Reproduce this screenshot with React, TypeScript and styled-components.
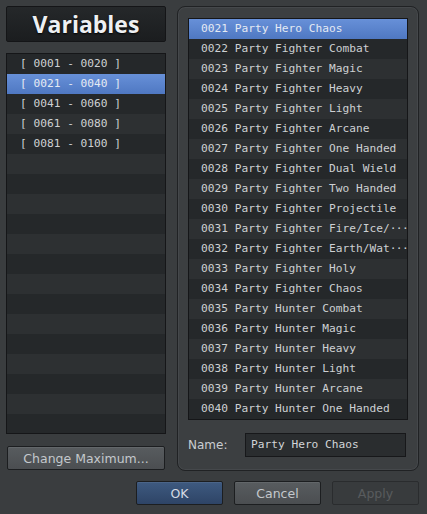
import styled, { createGlobalStyle } from 'styled-components';

const GlobalStyle = createGlobalStyle`
  html, body {
    margin: 0;
    padding: 0;
    background: #3a3d3f;
    overflow: hidden;
  }
  * {
    box-sizing: border-box;
  }
`;

const UI_FONT = `'DejaVu Sans', 'Liberation Sans', sans-serif`;
const MONO_FONT = `'DejaVu Sans Mono', 'Liberation Mono', monospace`;

const Page = styled.div`
  width: 427px;
  height: 514px;
  padding: 6px 8px 0 6px;
  display: flex;
  flex-direction: column;
  gap: 10px;
  font-family: ${UI_FONT};
  font-size: 12px;
  color: #c9cdd1;
`;

const Main = styled.div`
  display: flex;
  gap: 11px;
  height: 465px;
`;

const LeftColumn = styled.div`
  width: 160px;
  flex-shrink: 0;
  display: flex;
  flex-direction: column;
`;

const TitleBox = styled.div`
  height: 36px;
  border: 1px solid #141517;
  border-radius: 2px;
  background: linear-gradient(#25282a, #1b1d1f);
  display: flex;
  align-items: center;
  justify-content: center;
  font-family: 'Open Sans', ${UI_FONT};
  font-weight: 700;
  font-size: 23px;
  color: #eef0f2;
  text-shadow: 0 1px 2px #000;
  padding-bottom: 1px;
`;

const ListFrame = styled.div<{ $height: number }>`
  height: ${({ $height }) => $height}px;
  border: 1px solid #151618;
  background: #26292b;
  overflow: hidden;
  font-family: ${MONO_FONT};
  font-size: 11.2px;
`;

const RangeFrame = styled(ListFrame)`
  margin-top: 11px;
`;

const Row = styled.div<{ $light: boolean; $selected?: boolean; $indent: number }>`
  height: 20px;
  line-height: 20px;
  padding-left: ${({ $indent }) => $indent}px;
  white-space: nowrap;
  color: ${({ $selected }) => ($selected ? '#e4eaf4' : '#cdd0d3')};
  background: ${({ $light, $selected }) =>
    $selected
      ? 'linear-gradient(#6790d8, #4f78c2)'
      : $light
      ? '#2d3032'
      : '#25282a'};
`;

const Elided = styled.span`
  letter-spacing: -0.6px;
`;

const Button = styled.button<{ $variant?: 'default' | 'primary' | 'disabled' }>`
  height: 24px;
  border-radius: 2px;
  font-family: ${UI_FONT};
  font-size: 12.5px;
  padding: 0;
  border: 1px solid
    ${({ $variant }) => ($variant === 'disabled' ? '#2a2c2e' : '#1c1e20')};
  color: ${({ $variant }) =>
    $variant === 'disabled' ? '#585b5e' : $variant === 'primary' ? '#d6dce4' : '#c4c8cc'};
  background: ${({ $variant }) =>
    $variant === 'primary'
      ? 'linear-gradient(#3e5a80, #2e4466)'
      : $variant === 'disabled'
      ? '#383b3d'
      : 'linear-gradient(#585c5f, #4b4e51)'};
  box-shadow: ${({ $variant }) =>
    $variant === 'disabled' ? 'none' : 'inset 0 1px 0 rgba(255,255,255,0.07)'};
`;

const WideButton = styled(Button)`
  margin: 12px 1px 0;
`;

const Panel = styled.div`
  flex: 1;
  min-width: 0;
  border: 1px solid #202224;
  border-radius: 8px;
  background: #3c3f41;
  box-shadow: inset 0 0 0 1px #45484b;
  padding: 11px 10px 13px;
  display: flex;
  flex-direction: column;
`;

const NameRow = styled.div`
  margin-top: 13px;
  display: flex;
  align-items: center;
`;

const Label = styled.span`
  width: 57px;
  color: #c9cdd1;
`;

const NameInput = styled.div`
  width: 161px;
  height: 24px;
  border: 1px solid #17181a;
  background: #2a2d2f;
  padding-left: 5px;
  line-height: 22px;
  font-family: ${MONO_FONT};
  font-size: 11.2px;
  color: #d2d5d8;
`;

const ButtonRow = styled.div`
  display: flex;
  justify-content: flex-end;
  gap: 11px;
`;

const DialogButton = styled(Button)`
  width: 87px;
`;

const ranges = ['[ 0001 - 0020 ]', '[ 0021 - 0040 ]', '[ 0041 - 0060 ]', '[ 0061 - 0080 ]', '[ 0081 - 0100 ]'];

// names the list shows cut short end in an elision mark
const variables: { name: string; elided?: boolean }[] = [
  { name: 'Party Hero Chaos' },
  { name: 'Party Fighter Combat' },
  { name: 'Party Fighter Magic' },
  { name: 'Party Fighter Heavy' },
  { name: 'Party Fighter Light' },
  { name: 'Party Fighter Arcane' },
  { name: 'Party Fighter One Handed' },
  { name: 'Party Fighter Dual Wield' },
  { name: 'Party Fighter Two Handed' },
  { name: 'Party Fighter Projectile' },
  { name: 'Party Fighter Fire/Ice/', elided: true },
  { name: 'Party Fighter Earth/Wat', elided: true },
  { name: 'Party Fighter Holy' },
  { name: 'Party Fighter Chaos' },
  { name: 'Party Hunter Combat' },
  { name: 'Party Hunter Magic' },
  { name: 'Party Hunter Heavy' },
  { name: 'Party Hunter Light' },
  { name: 'Party Hunter Arcane' },
  { name: 'Party Hunter One Handed' },
];

export default function App() {
  const rangeRows = Array.from({ length: 19 }, (_, i) => ranges[i] ?? '');

  return (
    <>
      <GlobalStyle />
      <Page>
        <Main>
          <LeftColumn>
            <TitleBox>Variables</TitleBox>
            <RangeFrame $height={381}>
              {rangeRows.map((text, i) => (
                <Row key={i} $indent={13} $light={i % 2 === 1} $selected={i === 1}>
                  {text}
                </Row>
              ))}
            </RangeFrame>
            <WideButton>Change Maximum...</WideButton>
          </LeftColumn>
          <Panel>
            <ListFrame $height={402}>
              {variables.map((v, i) => (
                <Row key={i} $indent={12} $light={i % 2 === 0} $selected={i === 0}>
                  {String(21 + i).padStart(4, '0')} {v.name}
                  {v.elided && <Elided>···</Elided>}
                </Row>
              ))}
            </ListFrame>
            <NameRow>
              <Label>Name:</Label>
              <NameInput>Party Hero Chaos</NameInput>
            </NameRow>
          </Panel>
        </Main>
        <ButtonRow>
          <DialogButton $variant="primary">OK</DialogButton>
          <DialogButton>Cancel</DialogButton>
          <DialogButton $variant="disabled">Apply</DialogButton>
        </ButtonRow>
      </Page>
    </>
  );
}
